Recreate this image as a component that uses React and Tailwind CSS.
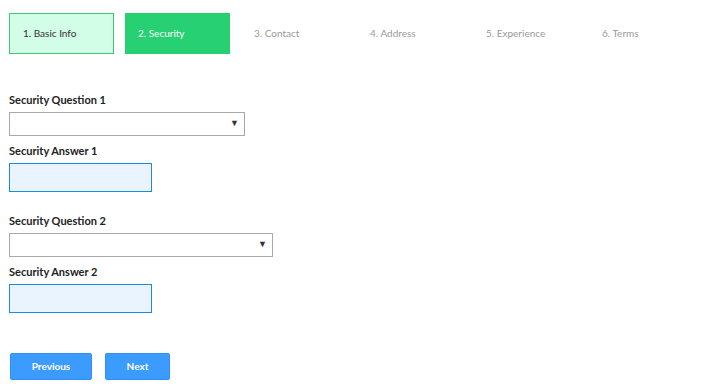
import React, { useState } from 'react';

const steps = ['1. Basic Info', '2. Security', '3. Contact', '4. Address', '5. Experience', '6. Terms'];

function Step({ label, index, current }) {
    const done = index < current;
    const active = index === current;
    let cls = 'text-[#999]';
    if (done) cls = 'border border-[#3fc67a] bg-[#d2fde6] text-[#333]';
    if (active) cls = 'bg-[#27d072] text-white';
    return (
        <div className={`flex h-[41px] w-[105px] shrink-0 items-center pl-[13px] text-[10px] ${cls}`}>
            {label}
        </div>
    );
}

function SelectField({ label, width }) {
    return (
        <div className="flex flex-col">
            <label className="mb-[5px] text-[11px] font-bold leading-[14px] text-[#222]">{label}</label>
            <div className="relative flex h-[24px] items-center border border-[#aaa] bg-white" style={{ width }}>
                <span className="absolute right-[5px] top-[5px] text-[9px] leading-none text-[#333]">▼</span>
            </div>
        </div>
    );
}

function AnswerField({ label }) {
    return (
        <div className="flex flex-col">
            <label className="mb-[5px] text-[11px] font-bold leading-[14px] text-[#222]">{label}</label>
            <input className="h-[29px] w-[143px] border border-[#1e88e5] bg-[#eaf4ff] outline-none" />
        </div>
    );
}

export default function App() {
    const [current] = useState(1);

    return (
        <div className="min-h-[391px] w-[701px] bg-white pl-[9px] pt-[13px] font-['Lato','Liberation_Sans',sans-serif]">
            <div className="flex gap-[11px]">
                {steps.map((s, i) => <Step key={s} label={s} index={i} current={current} />)}
            </div>

            <div className="mt-[39px] flex flex-col">
                <SelectField label="Security Question 1" width={236} />
                <div className="mt-[8px]">
                    <AnswerField label="Security Answer 1" />
                </div>
                <div className="mt-[22px]">
                    <SelectField label="Security Question 2" width={264} />
                </div>
                <div className="mt-[8px]">
                    <AnswerField label="Security Answer 2" />
                </div>
            </div>

            <div className="mt-[40px] flex gap-[13px] pl-[1px]">
                <button className="h-[27px] w-[82px] rounded-[2px] border border-[#2f8ff5] bg-[#3b9bff] text-[10px] font-bold text-white">Previous</button>
                <button className="h-[27px] w-[65px] rounded-[2px] border border-[#2f8ff5] bg-[#3b9bff] text-[10px] font-bold text-white">Next</button>
            </div>
        </div>
    );
}
